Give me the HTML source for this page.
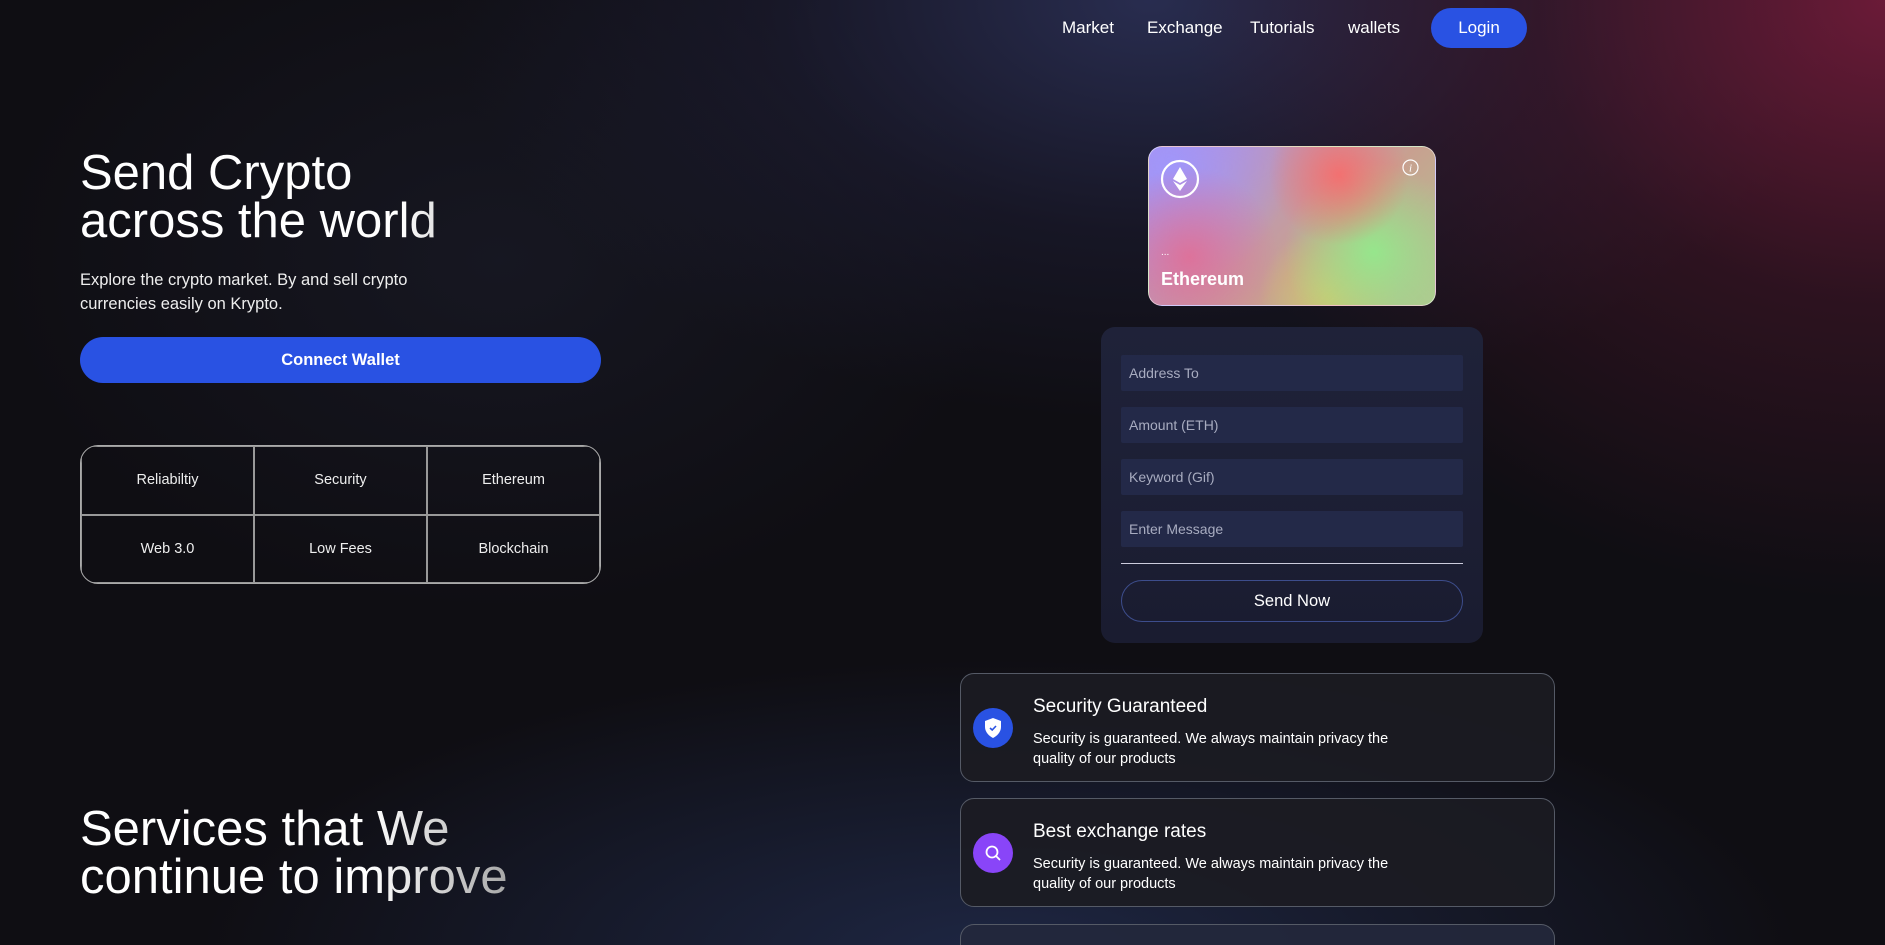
<!DOCTYPE html>
<html><head><meta charset="utf-8"><style>
*{margin:0;padding:0;box-sizing:border-box}
html,body{width:1885px;height:945px;overflow:hidden}
body{font-family:"Liberation Sans",sans-serif;color:#fff;position:relative;
background:
radial-gradient(ellipse 700px 600px at 1885px 0px, rgba(130,30,65,.8), rgba(90,25,50,.4) 50%, transparent 100%),
radial-gradient(ellipse 700px 420px at 1150px 0px, rgba(45,50,90,.85), rgba(35,35,65,.4) 55%, transparent 100%),
radial-gradient(ellipse 800px 300px at 1000px 960px, rgba(40,55,100,.6), transparent 100%),
radial-gradient(ellipse 500px 350px at 500px 260px, rgba(30,32,48,.5), transparent 100%),
#0f0e13;}
.abs{position:absolute}
.nav a{position:absolute;top:18px;font-size:17px;color:#fff;text-decoration:none}
.login{position:absolute;left:1431px;top:8px;width:96px;height:40px;border-radius:20px;background:#2952e3;font-size:17px;text-align:center;line-height:40px}
h1{position:absolute;left:80px;font-weight:normal;font-size:49px;line-height:48px;
background:linear-gradient(90deg,#fff 0,#fff 320px,#999 450px);-webkit-background-clip:text;background-clip:text;color:transparent}
.sub{left:80px;top:268px;font-size:16.5px;line-height:24px;width:335px;color:#eee}
.cw{left:80px;top:337px;width:521px;height:46px;border-radius:23px;background:#2952e3;text-align:center;line-height:46px;font-weight:bold;font-size:16.5px}
.grid{left:80px;top:445px;width:521px;height:139px;border:1.5px solid #aaa;border-radius:18px;display:grid;grid-template-columns:1fr 1fr 1fr;grid-template-rows:1fr 1fr;overflow:hidden}
.grid div{border:1px solid #999;display:flex;align-items:center;justify-content:center;font-size:14.5px;color:#eee}
.card{left:1148px;top:146px;width:288px;height:160px;border-radius:14px;border:1px solid rgba(255,255,255,.5);overflow:hidden;
background:
radial-gradient(circle at 190px 28px, rgba(245,110,110,.95), transparent 70px),
radial-gradient(circle at 225px 105px, rgba(150,230,140,1), transparent 90px),
radial-gradient(circle at 180px 150px, rgba(210,200,110,.9), transparent 70px),
radial-gradient(circle at 40px 110px, rgba(225,110,150,.9), transparent 90px),
radial-gradient(circle at 20px 20px, rgba(160,150,250,1), transparent 120px),
linear-gradient(135deg,#b08ee8,#c8a090 60%,#b0c890)}
.form{left:1101px;top:327px;width:382px;height:316px;border-radius:14px;background:linear-gradient(180deg,#1f2239,#1a1c30)}
.inp{position:absolute;left:20px;width:342px;height:36px;background:#232948;border-radius:2px;color:#a8acc0;font-size:14px;line-height:36px;padding-left:8px}
.send{position:absolute;left:20px;top:253px;width:342px;height:42px;border:1px solid #3d4d8c;border-radius:21px;text-align:center;line-height:40px;font-size:16.5px}
.fc{left:960px;width:595px;height:109px;border:1px solid #555a66;border-radius:14px;background:rgba(28,28,34,.9)}
.fc .ic{position:absolute;left:12px;top:34px;width:40px;height:40px;border-radius:50%;display:flex;align-items:center;justify-content:center}
.fc .t{position:absolute;left:72px;top:22px;font-size:19px}
.fc .d{position:absolute;left:72px;top:55px;font-size:14.5px;line-height:20px;width:400px}
</style></head><body>
<div class="nav"><a style="left:1062px">Market</a><a style="left:1147px">Exchange</a><a style="left:1250px">Tutorials</a><a style="left:1348px">wallets</a></div>
<div class="login">Login</div>

<h1 style="top:149px">Send Crypto<br>across the world</h1>
<div class="abs sub">Explore the crypto market. By and sell crypto currencies easily on Krypto.</div>
<div class="abs cw">Connect Wallet</div>
<div class="abs grid"><div>Reliabiltiy</div><div>Security</div><div>Ethereum</div><div>Web 3.0</div><div>Low Fees</div><div>Blockchain</div></div>
<h1 style="top:805px;background:linear-gradient(90deg,#fff 0,#fff 290px,#999 450px);-webkit-background-clip:text;background-clip:text">Services that We<br>continue to improve</h1>

<div class="abs card">
<svg class="abs" style="left:11px;top:12px" width="40" height="40" viewBox="0 0 40 40"><circle cx="20" cy="20" r="18" fill="none" stroke="#fff" stroke-width="2.2"/><path d="M20 8 L13 20 L20 24 L27 20Z" fill="#fff"/><path d="M13 22 L20 32 L27 22 L20 26Z" fill="#fff"/></svg>
<svg class="abs" style="left:253px;top:12px" width="17" height="17" viewBox="0 0 17 17"><circle cx="8.5" cy="8.5" r="7.5" fill="none" stroke="#fff" stroke-width="1.2"/><text x="8.5" y="12.5" font-size="11" font-style="italic" text-anchor="middle" fill="#fff" font-family="Liberation Serif,serif">i</text></svg>
<div class="abs" style="left:12px;top:100px;font-size:10px">...</div>
<div class="abs" style="left:12px;top:122px;font-size:18px;font-weight:bold">Ethereum</div>
</div>

<div class="abs form">
<div class="inp" style="top:28px">Address To</div>
<div class="inp" style="top:80px">Amount (ETH)</div>
<div class="inp" style="top:132px">Keyword (Gif)</div>
<div class="inp" style="top:184px">Enter Message</div>
<div style="position:absolute;left:20px;top:236px;width:342px;height:1px;background:#ccd"></div>
<div class="send">Send Now</div>
</div>

<div class="abs fc" style="top:673px">
<div class="ic" style="background:#2952e3"><svg width="20" height="22" viewBox="0 0 20 22"><path d="M10 1 L18 4 V10 C18 15 14 19 10 21 C6 19 2 15 2 10 V4Z" fill="#fff"/><path d="M7 11 L9.2 13 L13 9" fill="none" stroke="#2952e3" stroke-width="1.6"/></svg></div>
<div class="t">Security Guaranteed</div>
<div class="d">Security is guaranteed. We always maintain privacy the quality of our products</div>
</div>
<div class="abs fc" style="top:798px">
<div class="ic" style="background:#8945f8"><svg width="20" height="20" viewBox="0 0 20 20"><circle cx="9" cy="9" r="5.5" fill="none" stroke="#fff" stroke-width="1.8"/><path d="M13 13 L17 17" stroke="#fff" stroke-width="1.8"/></svg></div>
<div class="t">Best exchange rates</div>
<div class="d">Security is guaranteed. We always maintain privacy the quality of our products</div>
</div>
<div class="abs fc" style="top:924px;height:21px;border-bottom:none;border-radius:14px 14px 0 0;background:rgba(35,40,60,.9)"></div>
</body></html>
